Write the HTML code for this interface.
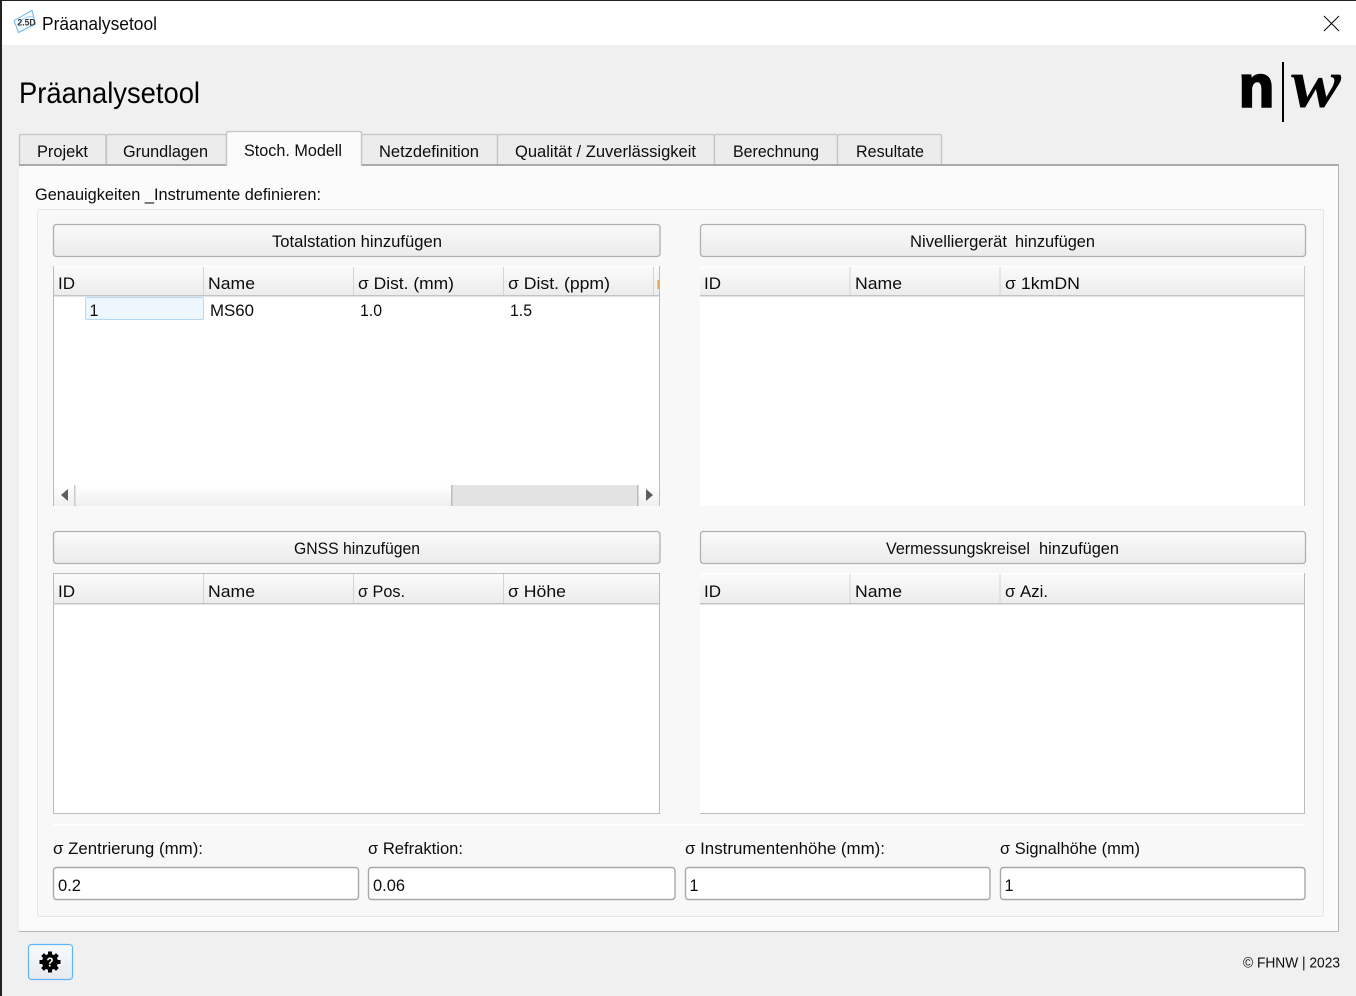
<!DOCTYPE html>
<html lang="de">
<head>
<meta charset="utf-8">
<title>Präanalysetool</title>
<style>
html,body{margin:0;padding:0;width:1356px;height:996px;overflow:hidden;background:#f0f0f0}
svg{display:block}
text{font-family:"Liberation Sans",sans-serif;font-size:17px;fill:#0c0c0c}
</style>
</head>
<body>
<svg xmlns="http://www.w3.org/2000/svg" width="1356" height="996" viewBox="0 0 1356 996">
<defs>
<linearGradient id="h" x1="0" y1="0" x2="0" y2="1"><stop offset="0" stop-color="#fbfbfb"/><stop offset="1" stop-color="#ececec"/></linearGradient>
<linearGradient id="b" x1="0" y1="0" x2="0" y2="1"><stop offset="0" stop-color="#fafafa"/><stop offset="1" stop-color="#ebebeb"/></linearGradient>
<linearGradient id="s" x1="0" y1="0" x2="0" y2="1"><stop offset="0" stop-color="#ffffff"/><stop offset="1" stop-color="#efefef"/></linearGradient>
<linearGradient id="g" x1="0" y1="0" x2="0" y2="1"><stop offset="0" stop-color="#f8fbfe"/><stop offset="1" stop-color="#e6eaee"/></linearGradient>
</defs>

<!-- window -->
<rect width="1356" height="996" fill="#f0f0f0"/>
<rect width="1356" height="1" fill="#222"/>
<rect width="2" height="996" fill="#222"/>
<rect x="2" y="1" width="1354" height="44" fill="#fff"/>

<!-- title bar icon -->
<path d="M14 20.500L32 10.500L35.500 24L18.500 32.500Z" fill="#f6fbff" stroke="#6cb4ea" stroke-width="1"/>
<path d="M17 25Q25 15 33 17" fill="none" stroke="#a4d0f2" stroke-width="1"/>
<text x="17.500" y="25.500" textLength="18" lengthAdjust="spacingAndGlyphs" style="font-size:9px;font-weight:bold;fill:#333">2.5D</text>
<text x="42" y="30" textLength="115" lengthAdjust="spacingAndGlyphs" style="font-size:18px">Präanalysetool</text>
<path d="M1324 16 L1339 31 M1339 16 L1324 31" stroke="#111" stroke-width="1.100" fill="none"/>

<!-- heading and logo -->
<text x="19" y="103" textLength="181" lengthAdjust="spacingAndGlyphs" style="font-size:30px;fill:#000">Präanalysetool</text>
<text x="1239" y="106.500" textLength="35" lengthAdjust="spacingAndGlyphs" style="font-size:58px;font-weight:bold;fill:#000;stroke:#000;stroke-width:2.500px">n</text>
<rect x="1282" y="62" width="2" height="60" fill="#000"/>
<text x="1291" y="107" textLength="50" lengthAdjust="spacingAndGlyphs" style="font-family:'Liberation Serif',serif;font-size:70px;font-style:italic;font-weight:bold;fill:#000">w</text>

<!-- inactive tabs -->
<g fill="#ececec" stroke="#c4c4c4" stroke-width="1.300">
<path d="M19.500 165V136.500q0-2 2-2H104q2 0 2 2V165"/>
<path d="M106.500 165V136.500q0-2 2-2H224.500q2 0 2 2V165"/>
<path d="M361.500 165V136.500q0-2 2-2H495.500q2 0 2 2V165"/>
<path d="M497.500 165V136.500q0-2 2-2H712.500q2 0 2 2V165"/>
<path d="M714.500 165V136.500q0-2 2-2H835.500q2 0 2 2V165"/>
<path d="M837.500 165V136.500q0-2 2-2H939.500q2 0 2 2V165"/>
</g>

<!-- tab pane -->
<rect x="19" y="166" width="1320" height="766" fill="#fbfbfb"/>
<path d="M19 165H226M361 165H1339" stroke="#ababab" stroke-width="2" fill="none"/>
<path d="M1338.500 165V931.500H19" stroke="#b4b4b4" stroke-width="1" fill="none"/>

<!-- active tab -->
<path d="M226.500 166V133.500q0-2 2-2H359.500q2 0 2 2V166" fill="#fbfbfb" stroke="#c4c4c4" stroke-width="1.300"/>

<text x="37" y="157" textLength="51" lengthAdjust="spacingAndGlyphs">Projekt</text>
<text x="123" y="157" textLength="85" lengthAdjust="spacingAndGlyphs">Grundlagen</text>
<text x="244" y="156" textLength="98" lengthAdjust="spacingAndGlyphs">Stoch. Modell</text>
<text x="379" y="157" textLength="100" lengthAdjust="spacingAndGlyphs">Netzdefinition</text>
<text x="515" y="157" textLength="181" lengthAdjust="spacingAndGlyphs">Qualität / Zuverlässigkeit</text>
<text x="733" y="157" textLength="86" lengthAdjust="spacingAndGlyphs">Berechnung</text>
<text x="856" y="157" textLength="68" lengthAdjust="spacingAndGlyphs">Resultate</text>

<text x="35" y="200" textLength="286" lengthAdjust="spacingAndGlyphs">Genauigkeiten _Instrumente definieren:</text>

<!-- inner group -->
<rect x="37.500" y="209.500" width="1286" height="707" rx="2" fill="#f8f8f8" stroke="#e6e6e6" stroke-width="1"/>
<rect x="53" y="824" width="1252" height="2" fill="#ffffff"/>

<!-- table bodies -->
<rect x="54" y="266" width="605" height="240" fill="#fff"/>
<rect x="700" y="266" width="604" height="240" fill="#fff"/>
<rect x="54" y="573" width="605" height="240" fill="#fff"/>
<rect x="700" y="573" width="604" height="240" fill="#fff"/>

<!-- buttons -->
<g fill="url(#b)" stroke="#b0b0b0" stroke-width="1.300">
<rect x="53.500" y="224.500" width="606.500" height="32" rx="3"/>
<rect x="700.500" y="224.500" width="605" height="32" rx="3"/>
<rect x="53.500" y="531.500" width="606.500" height="32" rx="3"/>
<rect x="700.500" y="531.500" width="605" height="32" rx="3"/>
</g>
<text x="272" y="247" textLength="170" lengthAdjust="spacingAndGlyphs">Totalstation hinzufügen</text>
<text x="910" y="247" textLength="97" lengthAdjust="spacingAndGlyphs">Nivelliergerät</text>
<text x="1015" y="247" textLength="80" lengthAdjust="spacingAndGlyphs">hinzufügen</text>
<text x="294" y="554" textLength="126" lengthAdjust="spacingAndGlyphs">GNSS hinzufügen</text>
<text x="886" y="554" textLength="144" lengthAdjust="spacingAndGlyphs">Vermessungskreisel</text>
<text x="1039" y="554" textLength="80" lengthAdjust="spacingAndGlyphs">hinzufügen</text>

<!-- table headers -->
<rect x="54" y="267" width="605" height="28" fill="url(#h)"/>
<rect x="700" y="267" width="604" height="28" fill="url(#h)"/>
<rect x="54" y="574" width="605" height="29" fill="url(#h)"/>
<rect x="700" y="574" width="604" height="29" fill="url(#h)"/>
<g fill="#c4c4c4">
<rect x="54" y="295" width="605" height="1.500"/>
<rect x="700" y="295" width="604" height="1.500"/>
<rect x="54" y="603" width="605" height="1.500"/>
<rect x="700" y="603" width="604" height="1.500"/>
</g>
<g fill="#d4d4d4">
<rect x="203" y="267" width="1" height="28"/><rect x="353" y="267" width="1" height="28"/><rect x="503" y="267" width="1" height="28"/><rect x="653" y="267" width="1" height="28"/>
<rect x="849.500" y="267" width="1" height="28"/><rect x="999.500" y="267" width="1" height="28"/>
<rect x="203" y="574" width="1" height="29"/><rect x="353" y="574" width="1" height="29"/><rect x="503" y="574" width="1" height="29"/>
<rect x="849.500" y="574" width="1" height="29"/><rect x="999.500" y="574" width="1" height="29"/>
</g>
<rect x="657.500" y="280" width="1.500" height="9" fill="#e0a060"/>

<!-- table borders -->
<path d="M53.500 266V506M659.500 266V506" stroke="#bcbcbc" fill="none"/>
<path d="M1304.500 266V506" stroke="#cccccc" fill="none"/>
<path d="M53.500 573.500H659.500V813.500H53.500Z" stroke="#bcbcbc" fill="none"/>
<path d="M700 813.500H1304.500V573" stroke="#bcbcbc" fill="none"/>

<!-- table text -->
<text x="58" y="289" textLength="17" lengthAdjust="spacingAndGlyphs">ID</text>
<text x="208" y="289" textLength="47" lengthAdjust="spacingAndGlyphs">Name</text>
<text x="358" y="289" textLength="96" lengthAdjust="spacingAndGlyphs">σ Dist. (mm)</text>
<text x="508" y="289" textLength="102" lengthAdjust="spacingAndGlyphs">σ Dist. (ppm)</text>
<text x="704" y="289" textLength="17" lengthAdjust="spacingAndGlyphs">ID</text>
<text x="855" y="289" textLength="47" lengthAdjust="spacingAndGlyphs">Name</text>
<text x="1005" y="289" textLength="75" lengthAdjust="spacingAndGlyphs">σ 1kmDN</text>

<rect x="85.500" y="297.500" width="118" height="22" rx="1.500" fill="#eef7fe" stroke="#b5d9f5"/>
<text x="89.500" y="316" textLength="9" lengthAdjust="spacingAndGlyphs">1</text>
<text x="210" y="316" textLength="44" lengthAdjust="spacingAndGlyphs">MS60</text>
<text x="360" y="316" textLength="22" lengthAdjust="spacingAndGlyphs">1.0</text>
<text x="510" y="316" textLength="22" lengthAdjust="spacingAndGlyphs">1.5</text>

<text x="58" y="597" textLength="17" lengthAdjust="spacingAndGlyphs">ID</text>
<text x="208" y="597" textLength="47" lengthAdjust="spacingAndGlyphs">Name</text>
<text x="358" y="597" textLength="47" lengthAdjust="spacingAndGlyphs">σ Pos.</text>
<text x="508" y="597" textLength="58" lengthAdjust="spacingAndGlyphs">σ Höhe</text>
<text x="704" y="597" textLength="17" lengthAdjust="spacingAndGlyphs">ID</text>
<text x="855" y="597" textLength="47" lengthAdjust="spacingAndGlyphs">Name</text>
<text x="1005" y="597" textLength="43" lengthAdjust="spacingAndGlyphs">σ Azi.</text>

<!-- scrollbar -->
<rect x="54" y="485" width="605" height="21" fill="url(#s)"/>
<rect x="452" y="485" width="186" height="21" fill="#e3e3e3"/>
<rect x="74" y="485" width="1.500" height="21" fill="#c8c8c8"/>
<rect x="451" y="485" width="1.500" height="21" fill="#bcbcbc"/>
<rect x="637" y="485" width="1.500" height="21" fill="#bcbcbc"/>
<path d="M68 489V501L61 495Z" fill="#5c5c5c"/>
<path d="M646 489V501L653 495Z" fill="#5c5c5c"/>

<!-- inputs -->
<text x="53" y="854" textLength="150" lengthAdjust="spacingAndGlyphs">σ Zentrierung (mm):</text>
<text x="368" y="854" textLength="95" lengthAdjust="spacingAndGlyphs">σ Refraktion:</text>
<text x="685" y="854" textLength="200" lengthAdjust="spacingAndGlyphs">σ Instrumentenhöhe (mm):</text>
<text x="1000" y="854" textLength="140" lengthAdjust="spacingAndGlyphs">σ Signalhöhe (mm)</text>
<g fill="#fff" stroke="#a8a8a8" stroke-width="1.400">
<rect x="53.500" y="867.500" width="305" height="32" rx="3"/>
<rect x="368.500" y="867.500" width="306.500" height="32" rx="3"/>
<rect x="685.500" y="867.500" width="304.500" height="32" rx="3"/>
<rect x="1000.500" y="867.500" width="304.500" height="32" rx="3"/>
</g>
<text x="58" y="891" textLength="23" lengthAdjust="spacingAndGlyphs">0.2</text>
<text x="373" y="891" textLength="32" lengthAdjust="spacingAndGlyphs">0.06</text>
<text x="689.500" y="891" textLength="9" lengthAdjust="spacingAndGlyphs">1</text>
<text x="1004.500" y="891" textLength="9" lengthAdjust="spacingAndGlyphs">1</text>

<!-- help button -->
<rect x="28.500" y="944.500" width="44" height="35" rx="3" fill="url(#g)" stroke="#62b5f5" stroke-width="1.200"/>
<g fill="#000">
<circle cx="50" cy="962" r="8"/>
<rect x="48" y="951.500" width="4" height="21"/>
<rect x="48" y="951.500" width="4" height="21" transform="rotate(45 50 962)"/>
<rect x="48" y="951.500" width="4" height="21" transform="rotate(90 50 962)"/>
<rect x="48" y="951.500" width="4" height="21" transform="rotate(135 50 962)"/>
</g>
<text x="46.500" y="966.500" textLength="7" lengthAdjust="spacingAndGlyphs" style="font-size:13px;font-weight:bold;fill:#fff">?</text>

<!-- footer -->
<text x="1243" y="967.500" textLength="97" lengthAdjust="spacingAndGlyphs" style="font-size:14.500px">© FHNW | 2023</text>
</svg>
</body>
</html>
